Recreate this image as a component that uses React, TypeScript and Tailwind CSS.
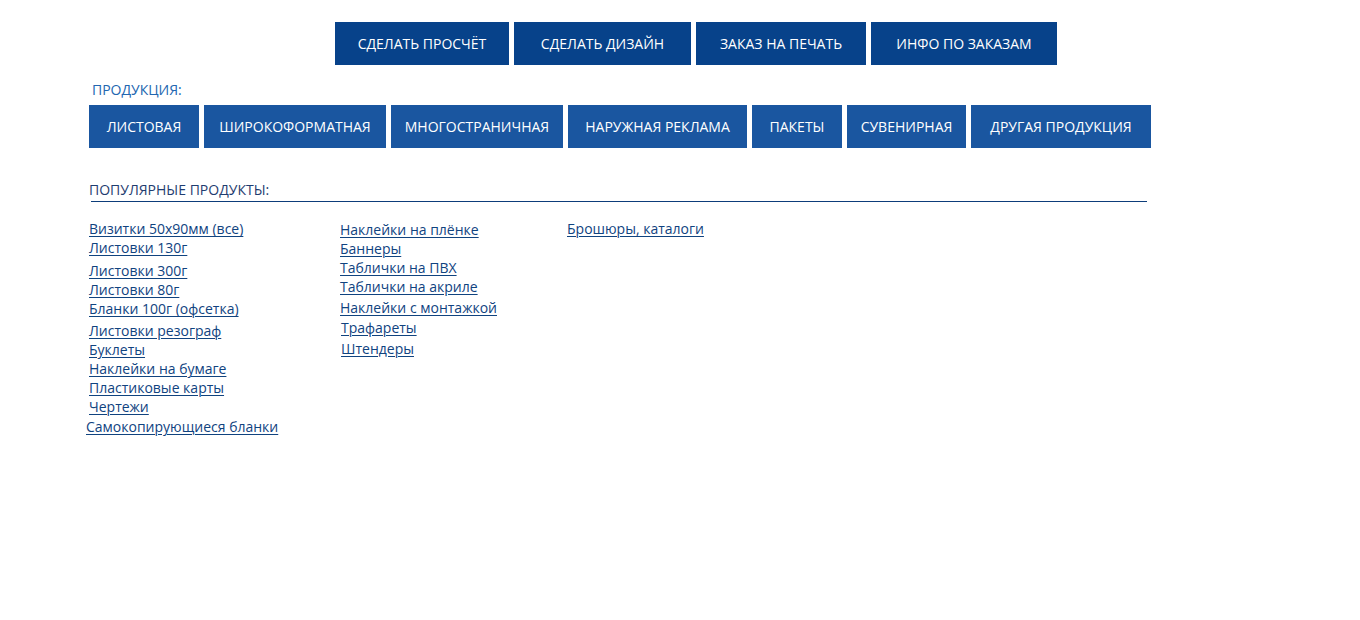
import React from "react";

const topNav = [
  { label: "СДЕЛАТЬ ПРОСЧЁТ", w: "w-[174px]" },
  { label: "СДЕЛАТЬ ДИЗАЙН", w: "w-[177px]" },
  { label: "ЗАКАЗ НА ПЕЧАТЬ", w: "w-[170px]" },
  { label: "ИНФО ПО ЗАКАЗАМ", w: "w-[186px]" },
];

const categories = [
  { label: "ЛИСТОВАЯ", w: "w-[110px]" },
  { label: "ШИРОКОФОРМАТНАЯ", w: "w-[182px]" },
  { label: "МНОГОСТРАНИЧНАЯ", w: "w-[172px]" },
  { label: "НАРУЖНАЯ РЕКЛАМА", w: "w-[179px]" },
  { label: "ПАКЕТЫ", w: "w-[90px]" },
  { label: "СУВЕНИРНАЯ", w: "w-[119px]" },
  { label: "ДРУГАЯ ПРОДУКЦИЯ", w: "w-[180px]" },
];

// extra top offsets copy the uneven row spacing of the original page
const col1 = [
  { t: "Визитки 50x90мм (все)", cls: "" },
  { t: "Листовки 130г", cls: "" },
  { t: "Листовки 300г", cls: "mt-[4px]" },
  { t: "Листовки 80г", cls: "" },
  { t: "Бланки 100г (офсетка)", cls: "" },
  { t: "Листовки резограф", cls: "mt-[3px]" },
  { t: "Буклеты", cls: "" },
  { t: "Наклейки на бумаге", cls: "" },
  { t: "Пластиковые карты", cls: "" },
  { t: "Чертежи", cls: "" },
  { t: "Самокопирующиеся бланки", cls: "mt-[1px] -ml-[3px]" },
];

const col2 = [
  { t: "Наклейки на плёнке", cls: "" },
  { t: "Баннеры", cls: "" },
  { t: "Таблички на ПВХ", cls: "" },
  { t: "Таблички на акриле", cls: "" },
  { t: "Наклейки с монтажкой", cls: "mt-[2px]" },
  { t: "Трафареты", cls: "mt-[1px] ml-[1px]" },
  { t: "Штендеры", cls: "mt-[2px] ml-[1px]" },
];

function LinkList({ items }: { items: { t: string; cls: string }[] }) {
  return (
    <div className="flex flex-col items-start">
      {items.map((it) => (
        <a
          key={it.t}
          href="#"
          className={`block h-[19px] text-[14px] leading-[19px] text-[#10437f] underline decoration-1 underline-offset-2 ${it.cls}`}
        >
          {it.t}
        </a>
      ))}
    </div>
  );
}

export default function App() {
  return (
    <div className="min-h-[620px] bg-white font-['Open_Sans',sans-serif]">
      <div className="flex gap-[5px] pt-[22px] pl-[335px]">
        {topNav.map((b) => (
          <a
            key={b.label}
            href="#"
            className={`${b.w} h-[43px] flex items-center justify-center bg-[#07428a] text-white text-[14px]`}
          >
            {b.label}
          </a>
        ))}
      </div>

      <div className="pl-[89px]">
        <div className="mt-[14px] ml-[3px] h-[21px] text-[14px] leading-[21px] text-[#2266b0]">ПРОДУКЦИЯ:</div>
        <div className="mt-[5px] flex gap-[5px]">
          {categories.map((c) => (
            <a
              key={c.label}
              href="#"
              className={`${c.w} h-[43px] flex items-center justify-center bg-[#1a56a0] text-white text-[14px]`}
            >
              {c.label}
            </a>
          ))}
        </div>

        <div className="mt-[32px] w-[1058px]">
          <div className="h-[20px] text-[14px] leading-[20px] text-[#1f3d70]">ПОПУЛЯРНЫЕ ПРОДУКТЫ:</div>
          <div className="ml-[2px] mt-[1px] border-b border-[#0d3d7a]" />
        </div>

        <div className="mt-[17px] flex">
          <div className="w-[251px]">
            <LinkList items={col1} />
          </div>
          <div className="w-[227px] mt-[1px]">
            <LinkList items={col2} />
          </div>
          <div>
            <LinkList items={[{ t: "Брошюры, каталоги", cls: "" }]} />
          </div>
        </div>
      </div>
    </div>
  );
}
